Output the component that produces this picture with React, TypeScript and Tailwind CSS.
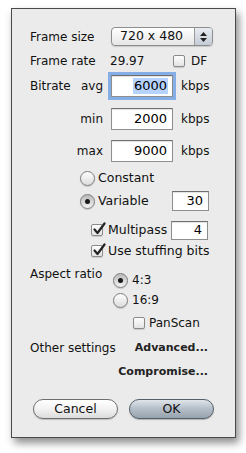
import React from "react";

const font = { fontFamily: '"DejaVu Sans", "Liberation Sans", sans-serif' };

function Check({ checked }: { checked?: boolean }) {
  return (
    <div className="relative w-[12px] h-[12px] shrink-0 rounded-[2px] border border-[#8a8a8a] bg-gradient-to-b from-[#fdfdfd] to-[#e4e4e4] shadow-[0_1px_1px_rgba(0,0,0,0.15)]">
      {checked && (
        <svg className="absolute left-[0px] top-[-3px]" width="14" height="14" viewBox="0 0 14 14">
          <path d="M2.5 7.5 L5.5 11 L12.5 1.5" fill="none" stroke="#222" strokeWidth="2.2" strokeLinecap="round" strokeLinejoin="round" />
        </svg>
      )}
    </div>
  );
}

function Radio({ checked }: { checked?: boolean }) {
  return (
    <div
      className={
        "relative w-[15px] h-[15px] shrink-0 rounded-full border border-[#7d7d7d] flex items-center justify-center shadow-[0_1px_1px_rgba(0,0,0,0.15)] " +
        (checked ? "bg-gradient-to-b from-[#b9b9b9] to-[#f4f4f4]" : "bg-gradient-to-b from-[#fefefe] to-[#dcdcdc]")
      }
    >
      {checked && <div className="w-[5px] h-[5px] rounded-full bg-[#1a1a1a]" />}
    </div>
  );
}

function Field({ value, w, h = 20, focused, selected }: { value: string; w: number; h?: number; focused?: boolean; selected?: boolean }) {
  return (
    <div
      className={
        "bg-white flex items-center justify-end pr-[4px] border border-[#8e8e8e] border-t-[#6f6f6f] shadow-[inset_0_1px_1px_rgba(0,0,0,0.12)] " +
        (focused ? "ring-[3px] ring-[#86aee6]" : "")
      }
      style={{ width: w, height: h }}
    >
      <span className={"text-[13px] leading-[16px] text-black px-[1px] " + (selected ? "bg-[#b6d3ff]" : "")}>{value}</span>
    </div>
  );
}

export default function App() {
  return (
    <div className="w-[246px] h-[453px] bg-white pt-[8px] pl-[11px]" style={font}>
      <div className="w-[225px] h-[430px] border border-[#4a4a4a] bg-[#ebebeb] shadow-[3px_5px_8px_rgba(0,0,0,0.45)] flex flex-col pt-[18px] text-[12px] text-[#111]">
        {/* Frame size */}
        <div className="flex items-center h-[19px] ml-[18px]">
          <div className="w-[81px]">Frame size</div>
          <div className="w-[102px] h-[19px] rounded-[4px] border border-[#8d8d8d] bg-gradient-to-b from-[#ffffff] to-[#e6e6e6] flex items-stretch shadow-[0_1px_1px_rgba(0,0,0,0.15)] overflow-hidden">
            <div className="flex-1 flex items-center pl-[8px] text-[12.5px]">720 x 480</div>
            <div className="w-[18px] border-l border-[#9a9a9a] bg-gradient-to-b from-[#e8ecf1] to-[#c5ccd6] flex flex-col items-center justify-center gap-[2px]">
              <svg width="7" height="4" viewBox="0 0 7 4"><path d="M3.5 0 L7 4 L0 4 Z" fill="#222" /></svg>
              <svg width="7" height="4" viewBox="0 0 7 4"><path d="M0 0 L7 0 L3.5 4 Z" fill="#222" /></svg>
            </div>
          </div>
        </div>
        {/* Frame rate */}
        <div className="flex items-center h-[18px] mt-[6px] ml-[18px]">
          <div className="w-[80px]">Frame rate</div>
          <div className="w-[63px]">29.97</div>
          <Check />
          <div className="ml-[6px]">DF</div>
        </div>
        {/* Bitrate avg */}
        <div className="flex items-center h-[22px] mt-[5px] ml-[18px]">
          <div className="w-[73px] flex justify-between">
            <span>Bitrate</span>
            <span>avg</span>
          </div>
          <div className="ml-[8px]"><Field value="6000" w={62} h={22} focused selected /></div>
          <div className="ml-[8px]">kbps</div>
        </div>
        {/* min */}
        <div className="flex items-center h-[22px] mt-[11px] ml-[18px]">
          <div className="w-[73px] text-right">min</div>
          <div className="ml-[8px]"><Field value="2000" w={62} h={22} /></div>
          <div className="ml-[8px]">kbps</div>
        </div>
        {/* max */}
        <div className="flex items-center h-[22px] mt-[10px] ml-[18px]">
          <div className="w-[73px] text-right">max</div>
          <div className="ml-[8px]"><Field value="9000" w={62} h={22} /></div>
          <div className="ml-[8px]">kbps</div>
        </div>
        {/* Constant */}
        <div className="flex items-center h-[18px] mt-[7px] ml-[68px]">
          <Radio />
          <div className="ml-[3px] text-[12.5px]">Constant</div>
        </div>
        {/* Variable */}
        <div className="flex items-center h-[20px] mt-[4px] ml-[68px]">
          <Radio checked />
          <div className="ml-[3px] w-[74px] text-[12.5px]">Variable</div>
          <Field value="30" w={37} h={20} />
        </div>
        {/* Multipass */}
        <div className="flex items-center h-[20px] mt-[9px] ml-[79px]">
          <Check checked />
          <div className="ml-[5px] w-[63px] text-[12.5px]">Multipass</div>
          <Field value="4" w={37} h={19} />
        </div>
        {/* Use stuffing bits */}
        <div className="flex items-center h-[18px] mt-[2px] ml-[79px]">
          <Check checked />
          <div className="ml-[5px] text-[12.5px]">Use stuffing bits</div>
        </div>
        {/* Aspect ratio */}
        <div className="flex items-center h-[18px] mt-[11px] ml-[18px]">
          <div className="w-[83px] self-start mt-[-6px]">Aspect ratio</div>
          <Radio checked />
          <div className="ml-[4px]">4:3</div>
        </div>
        <div className="flex items-center h-[18px] mt-[2px] ml-[101px]">
          <Radio />
          <div className="ml-[4px]">16:9</div>
        </div>
        {/* PanScan */}
        <div className="flex items-center h-[18px] mt-[5px] ml-[121px]">
          <Check />
          <div className="ml-[4px]">PanScan</div>
        </div>
        {/* Other settings */}
        <div className="flex items-center h-[18px] mt-[7px] ml-[18px] mr-[27px] justify-between">
          <div>Other settings</div>
          <div className="font-bold text-[11px] text-[#222]">Advanced...</div>
        </div>
        <div className="flex items-center justify-end h-[18px] mt-[6px] mr-[27px]">
          <div className="font-bold text-[11px] text-[#222]">Compromise...</div>
        </div>
        {/* Buttons */}
        <div className="flex items-center h-[20px] mt-[18px] ml-[21px] gap-[11px]">
          <div className="w-[85px] h-[20px] rounded-full border border-[#6e6e6e] bg-gradient-to-b from-[#ffffff] via-[#f2f2f2] to-[#dcdcdc] flex items-center justify-center text-[12.5px] shadow-[0_1px_1px_rgba(0,0,0,0.2)]">
            Cancel
          </div>
          <div className="w-[85px] h-[20px] rounded-full border border-[#55606b] bg-gradient-to-b from-[#dfe5ea] via-[#b3bdc7] to-[#97a3ae] flex items-center justify-center text-[12.5px] shadow-[0_1px_1px_rgba(0,0,0,0.25)]">
            OK
          </div>
        </div>
      </div>
    </div>
  );
}
